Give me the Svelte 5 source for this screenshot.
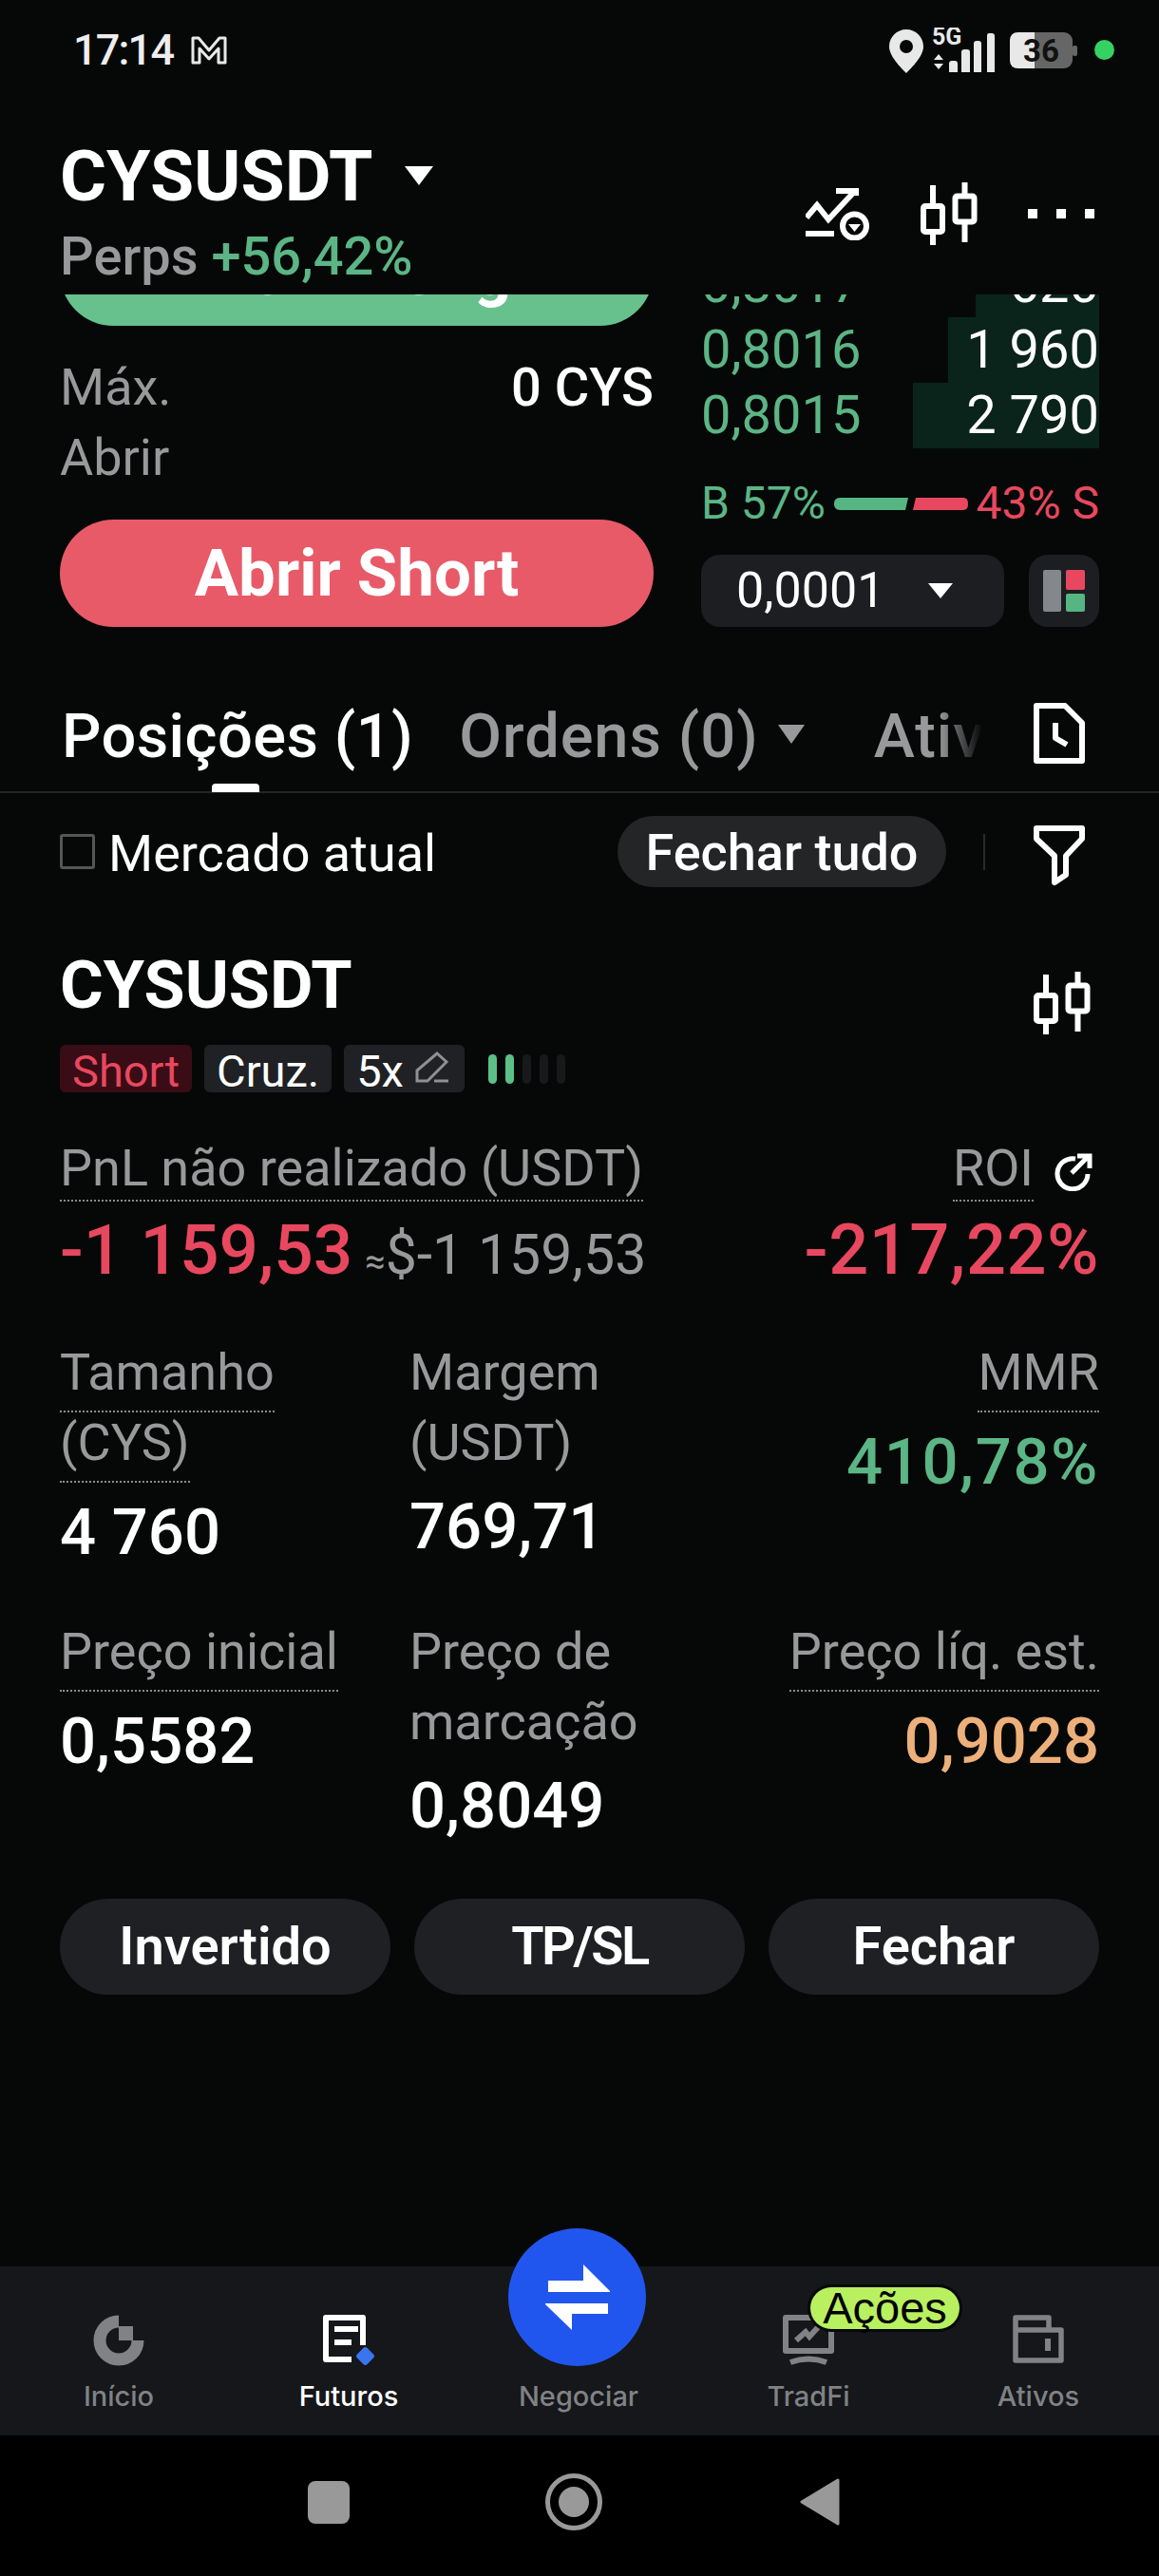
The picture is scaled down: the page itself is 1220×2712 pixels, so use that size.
<script>
  const bids = [
    { p: '0,8017', q: '620', w: 130 },
    { p: '0,8016', q: '1 960', w: 159 },
    { p: '0,8015', q: '2 790', w: 196 }
  ];
  const navItems = [
    { label: 'Início', k: 'home' },
    { label: 'Futuros', k: 'fut', active: true },
    { label: 'Negociar', k: 'trade' },
    { label: 'TradFi', k: 'tradfi' },
    { label: 'Ativos', k: 'assets' }
  ];
</script>

{#snippet candles()}
  <svg class="candles" viewBox="0 0 60 66" fill="none" stroke="#fff" stroke-width="6">
    <path d="M13 3V23M13 52V66M46.5 0V14M46.5 42V63" />
    <rect x="3" y="25" width="20" height="27" rx="2" />
    <rect x="36.5" y="14.5" width="20" height="27" rx="2" />
  </svg>
{/snippet}

<div class="app">
  <div class="status">
    <span class="time">17:14</span>
    <svg class="mail" viewBox="0 0 38 30" fill="none" stroke="#e8e8e8" stroke-width="3" stroke-linejoin="round">
      <path d="M2 2H8L19 15L30 2H36V28H29V13L19 24L9 13V28H2Z" />
    </svg>
    <div class="grow"></div>
    <svg class="pin" viewBox="0 0 36 46">
      <path fill-rule="evenodd" fill="#e8e8e8" d="M18 0C8 0 0 8 0 18C0 28 12 40 18 46C24 40 36 28 36 18C36 8 28 0 18 0ZM18 11A7 7 0 1 1 18 25A7 7 0 0 1 18 11Z" />
    </svg>
    <svg class="signal" viewBox="0 0 66 48">
      <text x="0" y="18" class="fiveg">5G</text>
      <path fill="#e8e8e8" d="M7 28L12 34H2ZM2 38H12L7 44ZM18 38Q18 35 21 35H24Q27 35 27 38V47H18ZM31 26Q31 23 34 23H37Q40 23 40 26V47H31ZM44 17Q44 14 47 14H49Q52 14 52 17V47H44ZM58 9Q58 6 60 6H63Q66 6 66 9V47H58Z" />
    </svg>
    <svg class="battery" viewBox="0 0 72 38">
      <rect x="0" y="0" width="66" height="38" rx="9" fill="#666" />
      <path d="M9 0H26V38H9Q0 38 0 29V9Q0 0 9 0Z" fill="#e8e8e8" />
      <rect x="66" y="14" width="5" height="11" rx="2" fill="#666" />
      <text x="33" y="31" text-anchor="middle" class="batt">36</text>
    </svg>
    <span class="dot"></span>
  </div>

  <header class="head">
    <div>
      <div class="title-row">
        <span class="title">CYSUSDT</span>
        <svg class="tcaret" viewBox="0 0 30 20"><path d="M0 0H30L15 20Z" fill="#fff" /></svg>
      </div>
      <div class="perps"><span class="grey">Perps</span> <span class="green">+56,42%</span></div>
    </div>
    <div class="head-icons">
      <svg class="alert" viewBox="0 0 67 55" fill="none" stroke="#fff" stroke-width="6">
        <path d="M1 31L12 18L24 33L52 3M32 3H53V8" />
        <path d="M0 48H30" />
        <circle cx="51.5" cy="40" r="12.5" />
        <path d="M45 38H58L51.5 46Z" fill="#fff" stroke="none" />
      </svg>
      {@render candles()}
      <div class="dots"><i></i><i></i><i></i></div>
    </div>
  </header>

  <section class="trade">
    <div class="left">
      <div class="clip"><div class="btn long">Abrir Long</div></div>
      <div class="line first"><span class="grey">Máx.</span><span class="white">0 CYS</span></div>
      <div class="line"><span class="grey">Abrir</span></div>
      <div class="btn short">Abrir Short</div>
    </div>
    <div class="right">
      <div class="book">
        {#each bids as b}
          <div class="row">
            <i class="depth" style="width:{b.w}px"></i>
            <span class="green">{b.p}</span><span class="qty">{b.q}</span>
          </div>
        {/each}
      </div>
      <div class="ratio">
        <span class="green">B 57%</span>
        <svg class="rbar" viewBox="0 0 141 13">
          <path d="M6 0H78L75 13H6Q0 13 0 6.5Q0 0 6 0Z" fill="#55b583" />
          <path d="M86 0H136Q141 0 141 6.5Q141 13 136 13H83Z" fill="#e8485f" />
        </svg>
        <span class="red">43% S</span>
      </div>
      <div class="selects">
        <div class="select">
          <span>0,0001</span>
          <svg class="scaret" viewBox="0 0 26 16"><path d="M0 0H26L13 16Z" fill="#fff" /></svg>
        </div>
        <div class="layout-btn">
          <svg viewBox="0 0 44 44">
            <rect x="0" y="0" width="19" height="44" rx="2" fill="#84878b" />
            <rect x="24" y="0" width="20" height="21" rx="2" fill="#e8485f" />
            <rect x="24" y="25" width="20" height="19" rx="2" fill="#55b583" />
          </svg>
        </div>
      </div>
    </div>
  </section>

  <nav class="tabs">
    <div class="tab on">Posições (1)<i class="ind"></i></div>
    <div class="tab off">Ordens (0)</div>
    <svg class="ocaret" viewBox="0 0 28 20"><path d="M0 0H28L14 20Z" fill="#98999b" /></svg>
    <div class="tab off fade">Ativos</div>
    <svg class="doc" viewBox="0 0 54 64" fill="none" stroke="#fff" stroke-width="6" stroke-linejoin="round">
      <path d="M3 3H33L51 21V61H3Z" />
      <path d="M23 21V37L35 44" />
    </svg>
  </nav>

  <div class="filter">
    <span class="check"></span>
    <span class="market">Mercado atual</span>
    <div class="grow"></div>
    <div class="closeall">Fechar tudo</div>
    <i class="sep"></i>
    <svg class="funnel" viewBox="0 0 54 64" fill="none" stroke="#fff" stroke-width="6" stroke-linejoin="round">
      <path d="M3 3H51V14L34 32V52L22 60V32L3 14Z" />
    </svg>
  </div>

  <section class="pos">
    <div class="pos-head">
      <span class="pos-title">CYSUSDT</span>
      {@render candles()}
    </div>
    <div class="badges">
      <span class="badge b-red"><span class="btxt">Short</span></span>
      <span class="badge"><span class="btxt">Cruz.</span></span>
      <span class="badge lev"><span class="btxt">5x</span>
        <svg class="pencil" viewBox="0 0 35 34" fill="none" stroke="#8f9092" stroke-width="3">
          <path d="M2 31V20L23 2L33 11L13 31Z" />
          <path d="M20 31H35" />
        </svg>
      </span>
      <div class="risk"><i class="g"></i><i class="g"></i><i></i><i></i><i></i></div>
    </div>

    <div class="pnl-labels">
      <span class="lbl"><span class="u tight">PnL não realizado (USDT)</span></span>
      <span class="lbl roi"><span class="u tight">ROI</span><svg class="share" viewBox="0 0 42 40" fill="none" stroke="#fff" stroke-width="5">
          <path d="M24 6A16 16 0 1 0 37 22" />
          <path d="M20 21L38 3M26 3H39V16" />
        </svg></span>
    </div>
    <div class="pnl-values">
      <div class="pnl-left"><span class="big red">-1 159,53</span><span class="approx"><small>≈</small>$-1 159,53</span></div>
      <span class="big red wide">-217,22%</span>
    </div>

    <div class="stats first-stats">
      <div><div class="lbl ul"><span class="u">Tamanho (CYS)</span></div><div class="val">4 760</div></div>
      <div><div class="lbl">Margem (USDT)</div><div class="val">769,71</div></div>
      <div class="end"><div class="lbl ul"><span class="u">MMR</span></div><div class="val green pct">410,78%</div></div>
    </div>
    <div class="stats second-stats">
      <div><div class="lbl ul"><span class="u">Preço inicial</span></div><div class="val">0,5582</div></div>
      <div><div class="lbl">Preço de marcação</div><div class="val">0,8049</div></div>
      <div class="end"><div class="lbl ul"><span class="u">Preço líq. est.</span></div><div class="val orange">0,9028</div></div>
    </div>

    <div class="actions">
      <div class="act">Invertido</div>
      <div class="act narrow">TP/SL</div>
      <div class="act">Fechar</div>
    </div>
  </section>

  <div class="grow"></div>

  <footer class="tabbar">
    {#each navItems as n}
      <div class="nav" class:active={n.active}>
        <div class="nav-ic">
          {#if n.k === 'home'}
            <svg viewBox="0 0 54 54" fill="none">
              <path d="M27 7A20 20 0 1 0 47 27" stroke="#808285" stroke-width="13" />
              <rect x="27" y="12" width="15" height="15" fill="#808285" />
            </svg>
          {:else if n.k === 'fut'}
            <svg viewBox="0 0 54 54" fill="none">
              <path d="M42 32V3H3V47H30" stroke="#fff" stroke-width="6" stroke-linejoin="round" />
              <path d="M12 15H37M12 29H30" stroke="#fff" stroke-width="6" />
              <rect x="37" y="36" width="15" height="15" rx="3" transform="rotate(45 44.5 43.5)" fill="#3b74f0" />
            </svg>
          {:else if n.k === 'tradfi'}
            <svg viewBox="0 0 54 54" fill="none">
              <path d="M3 3H51V38H3Z" stroke="#808285" stroke-width="6" stroke-linejoin="round" />
              <path d="M8 50Q27 43 46 50" stroke="#808285" stroke-width="6" />
              <path d="M14 27L24 18L28 23L38 12" stroke="#808285" stroke-width="6" />
            </svg>
          {:else if n.k === 'assets'}
            <svg viewBox="0 0 54 54" fill="none">
              <path d="M3 48V3H38V16H51V48ZM3 16H51" stroke="#808285" stroke-width="5.5" stroke-linejoin="round" />
              <path d="M37 25V38" stroke="#808285" stroke-width="6" />
            </svg>
          {/if}
        </div>
        <span>{n.label}</span>
      </div>
    {/each}
    <div class="fab">
      <svg viewBox="0 0 70 70">
        <path fill="#fff" d="M4 17H41V0L69 28V29H4ZM1 41H67V52H29V69L1 42Z" />
      </svg>
    </div>
    <div class="pill">Ações</div>
  </footer>

  <div class="sysnav">
    <i class="square"></i>
    <svg class="circle" viewBox="0 0 60 60"><circle cx="30" cy="30" r="27.5" fill="none" stroke="#999" stroke-width="5" /><circle cx="30" cy="30" r="16" fill="#999" /></svg>
    <svg class="back" viewBox="0 0 42 50"><path d="M40 2V48L2 25Z" fill="#999" stroke="#999" stroke-width="3" stroke-linejoin="round" /></svg>
  </div>
</div>

<style>
  :global(body) { margin: 0; background: #060808; }
  .app {
    width: 1220px; height: 2712px; background: #060808; color: #fff; overflow: hidden;
    font-family: Roboto, "Liberation Sans", Arial, sans-serif; display: flex; flex-direction: column; position: relative;
    font-size: 53px; line-height: 74px;
  }
  .grow { flex: 1; }
  .grey { color: #98999b; }
  .green { color: #5cb585; }
  .red { color: #e8485f; }
  .white { color: #fff; }
  .orange { color: #edb07a; }

  .status { height: 105px; flex: none; display: flex; align-items: center; padding: 0 47px 0 77px; }
  .time { font-size: 45px; letter-spacing: -1.8px; color: #eee; font-weight: 500; line-height: 50px; }
  .mail { width: 38px; height: 30px; margin-left: 19px; }
  .pin { width: 36px; height: 46px; margin-top: 2px; }
  .signal { width: 66px; height: 48px; margin-left: 9px; }
  .fiveg { font-size: 25px; font-weight: 700; fill: #e8e8e8; }
  .battery { width: 72px; height: 38px; margin-left: 16px; margin-top: 1px; }
  .batt { font-size: 33px; font-weight: 700; fill: #111; }
  .dot { width: 21px; height: 21px; border-radius: 50%; background: #36d163; margin-left: 17px; }

  .head { height: 205px; flex: none; padding: 45px 68px 0 63px; box-sizing: border-box; display: flex; justify-content: space-between; }
  .title-row { display: flex; align-items: center; height: 70px; }
  .title { font-size: 75px; line-height: 70px; font-weight: 700; }
  .tcaret { width: 30px; height: 20px; margin-left: 33px; margin-top: 0; }
  .perps { font-size: 56px; line-height: 70px; margin-top: 15px; font-weight: 500; }
  .head-icons { display: flex; align-items: center; height: 66px; margin-top: 42px; gap: 54px; }
  .alert { width: 67px; height: 55px; }
  .candles { width: 60px; height: 66px; display: block; }
  .dots { display: flex; gap: 20px; margin-left: -1px; }
  .dots i { width: 10px; height: 10px; background: #fff; display: block; }

  .trade { flex: none; height: 350px; padding: 0 63px; display: flex; gap: 50px; }
  .left { width: 625px; flex: none; }
  .right { width: 419px; flex: none; }
  .clip { height: 33px; overflow: hidden; }
  .btn { height: 113px; border-radius: 57px; text-align: center; line-height: 113px; font-size: 69px; font-weight: 700; }
  .long { background: #66c18c; margin-top: -80px; }
  .short { background: #e85a68; margin-top: 28px; }
  .line { display: flex; justify-content: space-between; font-size: 54px; line-height: 74px; }
  .line.first { margin-top: 28px; }
  .line .white { font-weight: 500; font-size: 56px; }

  .book { height: 161.5px; overflow: hidden; display: flex; flex-direction: column; justify-content: flex-end; }
  .row { flex: none; height: 69px; line-height: 69px; position: relative; display: flex; justify-content: space-between; font-size: 56px; }
  .depth { position: absolute; right: 0; top: 0; bottom: 0; background: #0a241b; }
  .row span { position: relative; }
  .qty { color: #fff; }
  .ratio { height: 40px; margin-top: 38.5px; line-height: 40px; font-size: 48px; display: flex; justify-content: space-between; align-items: center; }
  .rbar { width: 141px; height: 13px; }
  .selects { display: flex; margin-top: 34px; gap: 26px; height: 76px; }
  .select { width: 319px; background: #1c1e21; border-radius: 20px; display: flex; align-items: center; padding: 0 54px 0 37px; box-sizing: border-box; justify-content: space-between; font-size: 52px; }
  .scaret { width: 26px; height: 16px; }
  .layout-btn { width: 74px; background: #1c1e21; border-radius: 20px; display: flex; align-items: center; justify-content: center; }
  .layout-btn svg { width: 44px; height: 44px; }

  .tabs { height: 175px; flex: none; box-sizing: border-box; border-bottom: 2px solid #222426; padding: 80px 78px 0 65px; display: flex; align-items: flex-start; position: relative; }
  .tab { font-size: 65px; line-height: 70px; font-weight: 500; position: relative; white-space: nowrap; letter-spacing: .4px; }
  .on { color: #fff; }
  .off { color: #98999b; }
  .tab.off { margin-left: 48px; letter-spacing: .9px; }
  .ind { position: absolute; left: 158px; bottom: -24px; width: 50px; height: 9px; background: #fff; border-radius: 4px 4px 0 0; }
  .ocaret { width: 28px; height: 20px; margin: 23px 0 0 20px; flex: none; }
  .tab.fade { margin-left: 73px; width: 114px; overflow: hidden; -webkit-mask-image: linear-gradient(90deg, #000 60%, transparent); mask-image: linear-gradient(90deg, #000 60%, transparent); }
  .doc { width: 54px; height: 64px; margin-left: auto; flex: none; }

  .filter { height: 164px; flex: none; box-sizing: border-box; padding: 24px 78px 65px 63px; display: flex; align-items: center; }
  .check { width: 37px; height: 37px; box-sizing: border-box; border: 3px solid #555; border-radius: 3px; }
  .market { font-size: 54px; margin: 4px 0 0 14px; }
  .closeall { width: 346px; height: 75px; line-height: 77px; border-radius: 38px; background: #232527; text-align: center; font-size: 54px; font-weight: 500; }
  .sep { width: 2px; height: 38px; background: #2a2a2a; margin-left: 39px; }
  .funnel { width: 54px; height: 64px; margin: 9px 0 0 51px; }

  .pos { padding: 0 63px; flex: none; }
  .pos-head { display: flex; justify-content: space-between; height: 70px; align-items: flex-start; }
  .pos-title { font-size: 70px; line-height: 76px; font-weight: 700; }
  .pos-head .candles { margin: 24px 9px 0 0; }
  .badges { display: flex; gap: 13px; height: 50px; margin-top: 31px; align-items: center; }
  .badge { height: 50px; padding: 0 13px; background: #1f2124; border-radius: 6px; font-size: 47px; line-height: 56px; display: flex; align-items: flex-start; }
  .b-red { background: #3a0c16; color: #e8485f; }
  .pencil { width: 35px; height: 34px; margin: 7px 0 0 12px; }
  .lev { padding-right: 17px; }
  .risk { display: flex; gap: 9px; margin-left: 12px; }
  .risk i { width: 9px; height: 31px; border-radius: 5px; background: #17191b; display: block; }
  .risk i.g { background: #5cbf87; }

  .lbl { color: #98999b; font-size: 54px; line-height: 74px; }
  .u { border-bottom: 2px dotted #8a8a8a; padding-bottom: 9px; }
  .u.tight { padding-bottom: 2px; }
  .ul { padding-bottom: 6px; }
  .pnl-labels { display: flex; justify-content: space-between; margin-top: 43px; height: 74px; }
  .roi { display: block; text-align: right; padding-right: 7px; white-space: nowrap; }
  .share { width: 42px; height: 40px; margin-left: 20px; vertical-align: -6px; }
  .pnl-values { display: flex; justify-content: space-between; align-items: baseline; height: 80px; line-height: 80px; margin-top: 9px; }
  .big { font-size: 73px; font-weight: 500; }
  .big.wide { font-size: 74px; letter-spacing: .5px; }
  .approx { font-size: 59px; color: #98999b; margin-left: 13px; }
  .approx small { font-size: 38px; }
  .stats { display: grid; grid-template-columns: 368px 330px 1fr; }
  .first-stats { margin-top: 52px; }
  .second-stats { margin-top: 49px; }
  .stats > div:first-child { width: 330px; }
  .end { text-align: right; }
  .val { font-size: 67px; line-height: 80px; margin-top: 11px; font-weight: 500; }
  .val.pct { letter-spacing: 1.6px; }
  .actions { display: flex; gap: 25px; margin-top: 58px; }
  .act { flex: 1; height: 101px; line-height: 101px; border-radius: 51px; background: #1e2023; text-align: center; font-size: 56px; font-weight: 600; }
  .act.narrow { letter-spacing: -2.5px; }

  .tabbar { height: 178px; flex: none; background: #15171a; display: grid; grid-template-columns: repeat(5, 242px); padding-left: 4px; position: relative; }
  .nav { display: flex; flex-direction: column; align-items: center; color: #808285; font-family: Inter, "Liberation Sans", sans-serif; font-size: 29px; font-weight: 500; line-height: 40px; }
  .nav.active { color: #fff; }
  .nav-ic { width: 54px; height: 54px; margin-top: 51px; margin-bottom: 12px; }
  .nav-ic svg { width: 54px; height: 54px; display: block; }
  .fab { position: absolute; left: 535px; top: -40px; width: 145px; height: 145px; border-radius: 50%; background: #2156ee; display: flex; align-items: center; justify-content: center; }
  .fab svg { width: 70px; height: 70px; }
  .pill { position: absolute; left: 853px; top: 22px; width: 157px; height: 44px; border-radius: 25px; background: #b8f060; box-shadow: 0 0 0 3px #060808; color: #000; font-family: "Liberation Sans", Arial, sans-serif; font-size: 47px; line-height: 44px; text-align: center; }

  .sysnav { height: 148px; flex: none; background: #000; position: relative; display: flex; align-items: center; padding-left: 324px; padding-bottom: 8px; box-sizing: border-box; }
  .square { width: 44px; height: 45px; border-radius: 8px; background: #999; display: block; }
  .circle { width: 60px; height: 60px; margin-left: 206px; }
  .back { width: 42px; height: 50px; margin-left: 208px; }
</style>
